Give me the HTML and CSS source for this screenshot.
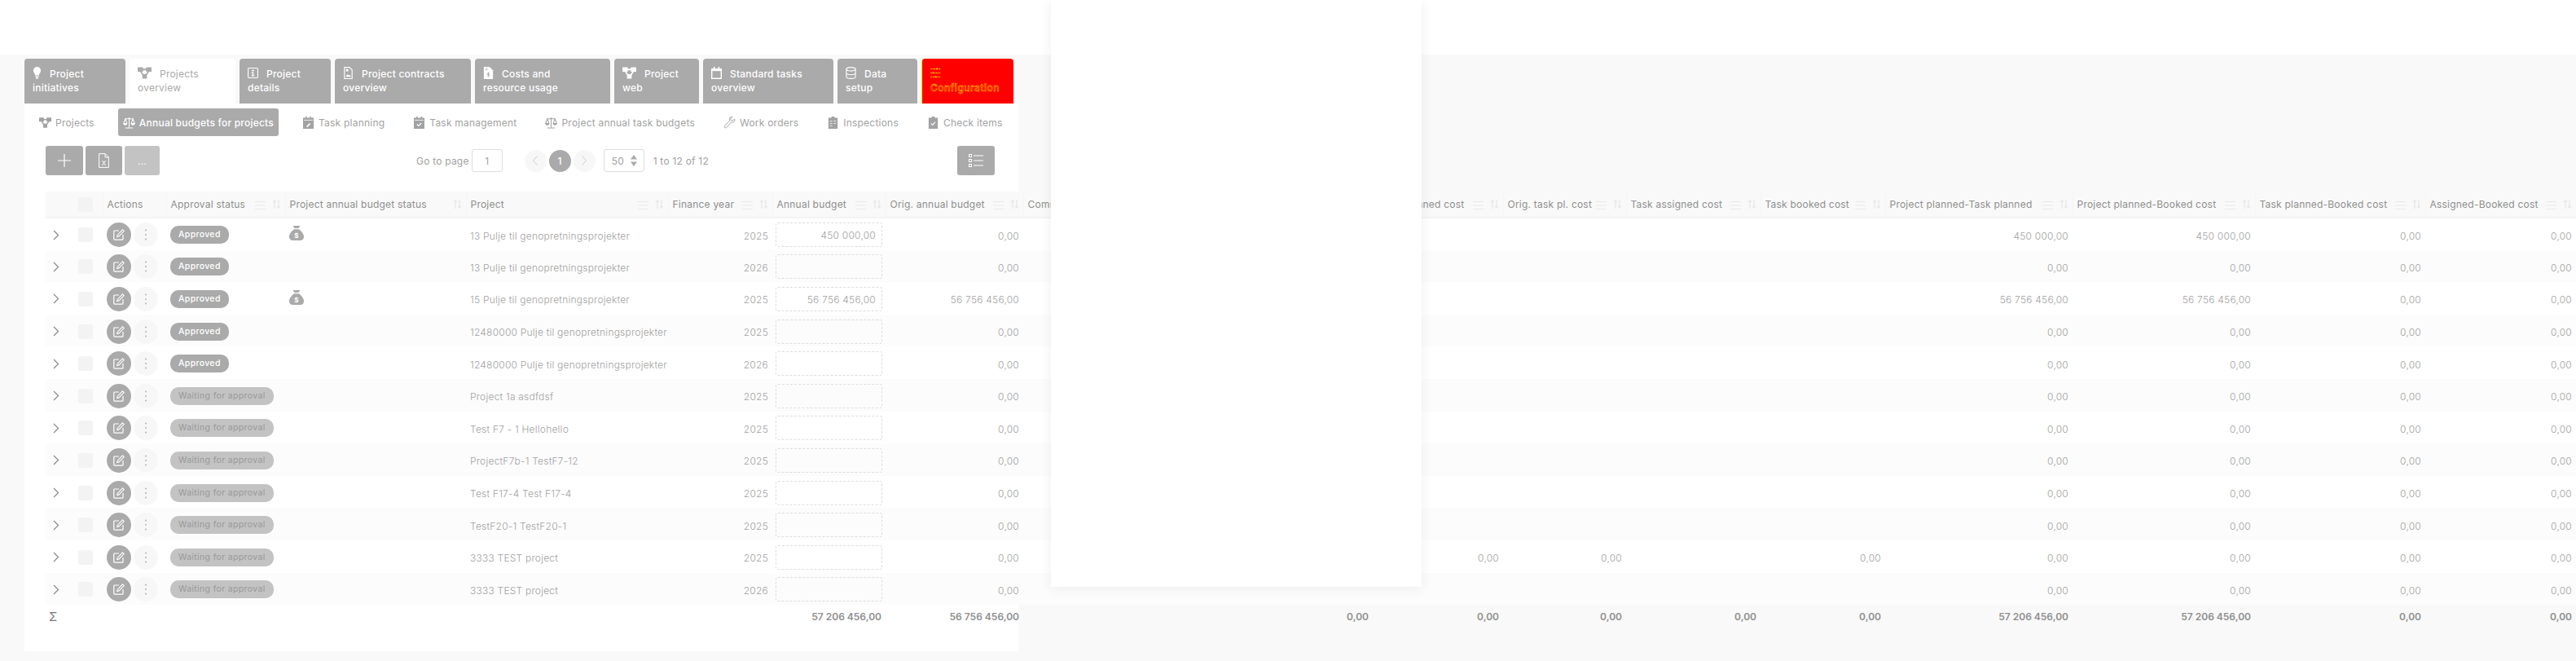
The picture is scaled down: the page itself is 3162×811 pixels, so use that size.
FILE: index.html
```html
<!DOCTYPE html>
<html lang="en">
<head>
  <meta charset="UTF-8">
  <title>Annual budgets for projects</title>
  <link rel="stylesheet" href="styles.css">
</head>
<body>
  <svg class="sprite" aria-hidden="true">
    <symbol id="i-bulb" viewBox="0 0 12 18"><path d="M6 0a5.5 5.5 0 0 1 5.5 5.5c0 3-2.2 4.300-2.700 7h-5.600C2.700 9.800.5 8.500.5 5.500A5.500 5.500 0 0 1 6 0z" fill="currentColor"/><rect x="3.400" y="13.500" width="5.200" height="1.600" fill="currentColor"/><rect x="4" y="15.800" width="4" height="1.800" rx=".8" fill="currentColor"/></symbol>
    <symbol id="i-nodes" viewBox="0 0 18 15"><g fill="currentColor"><rect width="7" height="6" rx=".6"/><rect x="11" width="7" height="6" rx=".6"/><rect x="6" y="9" width="6" height="6" rx=".6"/><path d="M6 2h6v2H6zM4.500 5l3.500 5-1.500 1-3.500-5zM13.500 5l1.500 1-3.500 5-1.500-1z"/></g></symbol>
    <symbol id="i-info" viewBox="0 0 14 14"><rect x=".6" y=".6" width="12.800" height="12.800" rx="1.400" fill="none" stroke="currentColor" stroke-width="1.200"/><path d="M5.500 3h3v1.600h-3zM5 6h2.800v4H9v1.200H5V10h1.300V7.200H5z" fill="currentColor"/></symbol>
    <symbol id="i-file-img" viewBox="0 0 12 16"><path d="M1 .6h6.500L11 4v11.400H1z" fill="none" stroke="currentColor" stroke-width="1.200"/><path d="M2.500 13l2.500-3.500 2 2 1-1 1.500 2.500z" fill="currentColor"/><rect x="3" y="3" width="3" height="3" fill="currentColor"/></symbol>
    <symbol id="i-file-usd" viewBox="0 0 12 16"><path d="M0 0h7.500L12 4.500V16H0z" fill="currentColor"/><path d="M6 7v6M7.600 8.300H5.300a.9.900 0 0 0 0 1.800h1.400a.9.900 0 0 1 0 1.800H4.400" fill="none" stroke="#aaa" stroke-width=".9"/><path d="M2 2h3M2 4h3" stroke="#aaa" stroke-width=".8"/></symbol>
    <symbol id="i-cal" viewBox="0 0 14 16"><path d="M3 0h1.800v2h4.400V0H11v2h3v14H0V2h3z" fill="currentColor"/><rect x="1.500" y="5.500" width="11" height="9" fill="#aaa"/></symbol>
    <symbol id="i-db" viewBox="0 0 14 16"><g fill="none" stroke="currentColor" stroke-width="1.200"><ellipse cx="7" cy="3" rx="6" ry="2.400"/><path d="M1 3v10c0 1.300 2.700 2.400 6 2.400s6-1.100 6-2.400V3M1 8c0 1.300 2.700 2.400 6 2.400s6-1.100 6-2.400"/></g></symbol>
    <symbol id="i-sliders" viewBox="0 0 16 16"><path d="M0 2h16M0 8h16M0 14h16M10 0v4M4 6v4M8 12v4" fill="none" stroke="currentColor" stroke-width="1" stroke-dasharray="3 1"/></symbol>
    <symbol id="i-scale" viewBox="0 0 16 16"><g fill="none" stroke="currentColor" stroke-width="1.100"><path d="M8 1v13M3 15h10M3 3h10M3 3L.8 9h4.400zM13 3l-2.200 6h4.400z"/></g><path d="M.5 9h5a2.500 2.500 0 0 1-5 0zM10.500 9h5a2.500 2.500 0 0 1-5 0z" fill="currentColor"/></symbol>
    <symbol id="i-cal-edit" viewBox="0 0 13 15"><path d="M3 0h1.600v1.600h3.800V0H10v1.600h3V15H0V1.600h3zM0 4.500h13" fill="currentColor"/><path d="M1 4.400h11" stroke="#fff" stroke-width=".8"/><path d="M4 12l4-4 1.200 1.200-4 4z" fill="#fff"/></symbol>
    <symbol id="i-cal-check" viewBox="0 0 13 15"><path d="M3 0h1.600v1.600h3.800V0H10v1.600h3V15H0V1.600h3z" fill="currentColor"/><path d="M1 4.400h11" stroke="#fff" stroke-width=".8"/><path d="M3.800 9.500l2 2 3.500-3.500" fill="none" stroke="#fff" stroke-width="1.200"/></symbol>
    <symbol id="i-wrench" viewBox="0 0 16 17"><path d="M15 3.500l-2.800 2.400-2.200-.5-.5-2.200L12 .6C9.800-.2 7.500 1.500 7.800 4.200c.1.600.2 1 .4 1.400L1.200 13c-1 1 0 3.400 2 2.600l7-7.500c3 1 6-1.600 4.800-4.600z" fill="none" stroke="currentColor" stroke-width="1.100"/></symbol>
    <symbol id="i-clip" viewBox="0 0 12 16"><path d="M4 0h4v1.500h4V16H0V1.500h4z" fill="currentColor"/><path d="M2 6h3M2 9h3M2 12h3M7 6h3M7 9h3" stroke="#fff" stroke-width=".8"/></symbol>
    <symbol id="i-clip-check" viewBox="0 0 12 16"><path d="M4 0h4v1.500h4V16H0V1.500h4z" fill="currentColor"/><path d="M3.200 9l2 2 3.500-4" fill="none" stroke="#fff" stroke-width="1.200"/></symbol>
    <symbol id="i-bag" viewBox="0 0 18 18"><path d="M4.500 0h9l-2 3h-5zM6 4.300h6c2.500 2 6 5.500 6 9.200 0 3-2 4.500-4.500 4.500h-9C2 18 0 16.500 0 13.500 0 9.800 3.500 6.300 6 4.300z" fill="currentColor"/><text x="9" y="15" text-anchor="middle" font-size="8" font-weight="700" fill="#fff" font-family="Inter, sans-serif">$</text></symbol>
    <symbol id="i-edit" viewBox="0 0 14 14"><path d="M7 2H1.800A1 1 0 0 0 .8 3v9.200a1 1 0 0 0 1 1H11a1 1 0 0 0 1-1V7" fill="none" stroke="currentColor" stroke-width="1.200"/><path d="M11.500.9l1.700 1.700L7 8.900l-2.300.6.600-2.300z" fill="none" stroke="currentColor" stroke-width="1.100"/></symbol>
    <symbol id="i-chev" viewBox="0 0 8 13"><path d="M1 1l5.500 5.500L1 12" fill="none" stroke="currentColor" stroke-width="1.200"/></symbol>
    <symbol id="i-more" viewBox="0 0 2 14"><g fill="currentColor"><circle cx="1" cy="1.500" r=".9"/><circle cx="1" cy="7" r=".9"/><circle cx="1" cy="12.500" r=".9"/></g></symbol>
    <symbol id="i-menu" viewBox="0 0 13 10"><path d="M0 .5h13M0 5h13M0 9.500h13" stroke="currentColor" stroke-width=".9"/></symbol>
    <symbol id="i-sort" viewBox="0 0 11 11"><path d="M3 11V1M.8 3L3 .8 5.200 3M8 0v10M5.800 8L8 10.200 10.200 8" fill="none" stroke="currentColor" stroke-width=".8"/></symbol>
  </svg>

  <div class="topbar"></div>

  <div class="page">
    <nav class="tabs">
      <a class="tab"><svg class="tab-icon tab-icon-bulb"><use href="#i-bulb"/></svg>Project<br>initiatives</a>
      <a class="tab active"><svg class="tab-icon tab-icon-nodes"><use href="#i-nodes"/></svg>Projects<br>overview</a>
      <a class="tab"><svg class="tab-icon"><use href="#i-info"/></svg>Project<br>details</a>
      <a class="tab"><svg class="tab-icon"><use href="#i-file-img"/></svg>Project contracts<br>overview</a>
      <a class="tab"><svg class="tab-icon"><use href="#i-file-usd"/></svg>Costs and<br>resource usage</a>
      <a class="tab"><svg class="tab-icon tab-icon-nodes"><use href="#i-nodes"/></svg>Project<br>web</a>
      <a class="tab"><svg class="tab-icon"><use href="#i-cal"/></svg>Standard tasks<br>overview</a>
      <a class="tab"><svg class="tab-icon"><use href="#i-db"/></svg>Data<br>setup</a>
      <a class="tab tab-alert"><svg class="tab-icon"><use href="#i-sliders"/></svg><br>Configuration</a>
    </nav>

    <main class="panel">
      <nav class="subnav">
        <a class="subnav-item"><svg class="sub-icon"><use href="#i-nodes"/></svg>Projects</a>
        <a class="subnav-item active"><svg class="sub-icon"><use href="#i-scale"/></svg>Annual budgets for projects</a>
        <a class="subnav-item"><svg class="sub-icon"><use href="#i-cal-edit"/></svg>Task planning</a>
        <a class="subnav-item"><svg class="sub-icon"><use href="#i-cal-check"/></svg>Task management</a>
        <a class="subnav-item"><svg class="sub-icon"><use href="#i-scale"/></svg>Project annual task budgets</a>
        <a class="subnav-item"><svg class="sub-icon"><use href="#i-wrench"/></svg>Work orders</a>
        <a class="subnav-item"><svg class="sub-icon"><use href="#i-clip"/></svg>Inspections</a>
        <a class="subnav-item"><svg class="sub-icon"><use href="#i-clip-check"/></svg>Check items</a>
      </nav>

      <div class="toolbar">
        <div class="tool-group">
          <button class="tool tool-add"><svg viewBox="0 0 16 16"><path d="M8 0v16M0 8h16" stroke="#fff" stroke-width="1.200"/></svg></button>
          <button class="tool tool-excel"><svg viewBox="0 0 13 18"><path d="M.6.6h7.500l4.300 4.300v12.500H.6zM8 .6V5h4.400" fill="none" stroke="#fff" stroke-width="1"/><text x="6.500" y="15" text-anchor="middle" font-size="8" fill="#fff" font-family="Inter, sans-serif">X</text></svg></button>
          <button class="tool tool-more">...</button>
        </div>
        <div class="pager">
          <span class="pager-label">Go to page</span>
          <input class="pager-input" type="text" value="1">
          <span class="page-btn page-prev"><svg viewBox="0 0 6 12"><path d="M5.500.5L.5 6l5 5.500" fill="none" stroke="#ccc"/></svg></span>
          <span class="page-btn current">1</span>
          <span class="page-btn"><svg viewBox="0 0 6 12"><path d="M.5.500l5 5.500-5 5.500" fill="none" stroke="#ccc"/></svg></span>
          <span class="page-size">50<svg viewBox="0 0 8 14"><path d="M4 0l4 5.500H0zM4 14L0 8.500h8z" fill="#aaa"/></svg></span>
          <span class="pager-count">1 to 12 of 12</span>
        </div>
        <button class="tool tool-columns"><svg viewBox="0 0 18 16"><path d="M6 2h12M6 8h12M6 14h12" stroke="#fff" stroke-width="1.200"/><g fill="none" stroke="#fff"><rect x=".5" y=".5" width="3" height="3"/><rect x=".5" y="6.500" width="3" height="3"/><rect x=".5" y="12.500" width="3" height="3"/></g></svg></button>
      </div>

      <table class="grid">
        <colgroup>
          <col class="c-exp"><col class="c-chk"><col class="c-act"><col class="c-appr"><col class="c-stat"><col class="c-proj"><col class="c-year"><col class="c-bud"><col class="c-orig"><col class="c-comm"><col class="c-tpl"><col class="c-otpl"><col class="c-tas"><col class="c-tbo"><col class="c-ptp"><col class="c-pbc"><col class="c-tpb"><col class="c-abc">
        </colgroup>
        <thead>
          <tr>
            <th></th>
            <th><span class="check"></span></th>
            <th><div class="th-in">Actions</div></th>
            <th><div class="th-in">Approval status<svg class="hd-menu"><use href="#i-menu"/></svg><svg class="hd-sort"><use href="#i-sort"/></svg></div></th>
            <th><div class="th-in">Project annual budget status<svg class="hd-sort hd-only"><use href="#i-sort"/></svg></div></th>
            <th><div class="th-in">Project<svg class="hd-menu"><use href="#i-menu"/></svg><svg class="hd-sort"><use href="#i-sort"/></svg></div></th>
            <th><div class="th-in">Finance year<svg class="hd-menu"><use href="#i-menu"/></svg><svg class="hd-sort"><use href="#i-sort"/></svg></div></th>
            <th><div class="th-in">Annual budget<svg class="hd-menu"><use href="#i-menu"/></svg><svg class="hd-sort"><use href="#i-sort"/></svg></div></th>
            <th><div class="th-in">Orig. annual budget<svg class="hd-menu"><use href="#i-menu"/></svg><svg class="hd-sort"><use href="#i-sort"/></svg></div></th>
            <th><div class="th-in">Committed cost<svg class="hd-menu"><use href="#i-menu"/></svg><svg class="hd-sort"><use href="#i-sort"/></svg></div></th>
            <th><div class="th-in">Task planned cost<svg class="hd-menu"><use href="#i-menu"/></svg><svg class="hd-sort"><use href="#i-sort"/></svg></div></th>
            <th><div class="th-in">Orig. task pl. cost<svg class="hd-menu"><use href="#i-menu"/></svg><svg class="hd-sort"><use href="#i-sort"/></svg></div></th>
            <th><div class="th-in">Task assigned cost<svg class="hd-menu"><use href="#i-menu"/></svg><svg class="hd-sort"><use href="#i-sort"/></svg></div></th>
            <th><div class="th-in">Task booked cost<svg class="hd-menu"><use href="#i-menu"/></svg><svg class="hd-sort"><use href="#i-sort"/></svg></div></th>
            <th><div class="th-in">Project planned-Task planned<svg class="hd-menu"><use href="#i-menu"/></svg><svg class="hd-sort"><use href="#i-sort"/></svg></div></th>
            <th><div class="th-in">Project planned-Booked cost<svg class="hd-menu"><use href="#i-menu"/></svg><svg class="hd-sort"><use href="#i-sort"/></svg></div></th>
            <th><div class="th-in">Task planned-Booked cost<svg class="hd-menu"><use href="#i-menu"/></svg><svg class="hd-sort"><use href="#i-sort"/></svg></div></th>
            <th><div class="th-in">Assigned-Booked cost<svg class="hd-menu"><use href="#i-menu"/></svg><svg class="hd-sort"><use href="#i-sort"/></svg></div></th>
          </tr>
        </thead>
        <tbody id="rows"></tbody>
        <tfoot>
          <tr>
            <td class="sigma">Σ</td><td></td><td></td><td></td><td></td><td></td><td></td>
            <td class="num">57 206 456,00</td><td class="num">56 756 456,00</td>
            <td class="num">0,00</td><td class="num">0,00</td><td class="num">0,00</td><td class="num">0,00</td><td class="num">0,00</td>
            <td class="num">57 206 456,00</td><td class="num">57 206 456,00</td><td class="num">0,00</td><td class="num">0,00</td>
          </tr>
        </tfoot>
      </table>
    </main>
  </div>

  <div class="popup"></div>

  <script src="rows.js"></script>
</body>
</html>
```

FILE: rows.js
```js
const rows = [
  ["Approved", true, "13 Pulje til genopretningsprojekter", 2025, "450 000,00", "0,00", "450 000,00", "450 000,00"],
  ["Approved", false, "13 Pulje til genopretningsprojekter", 2026, "", "0,00", "0,00", "0,00"],
  ["Approved", true, "15 Pulje til genopretningsprojekter", 2025, "56 756 456,00", "56 756 456,00", "56 756 456,00", "56 756 456,00"],
  ["Approved", false, "12480000 Pulje til genopretningsprojekter", 2025, "", "0,00", "0,00", "0,00"],
  ["Approved", false, "12480000 Pulje til genopretningsprojekter", 2026, "", "0,00", "0,00", "0,00"],
  ["Waiting for approval", false, "Project 1a asdfdsf", 2025, "", "0,00", "0,00", "0,00"],
  ["Waiting for approval", false, "Test F7 - 1 Hellohello", 2025, "", "0,00", "0,00", "0,00"],
  ["Waiting for approval", false, "ProjectF7b-1 TestF7-12", 2025, "", "0,00", "0,00", "0,00"],
  ["Waiting for approval", false, "Test F17-4 Test F17-4", 2025, "", "0,00", "0,00", "0,00"],
  ["Waiting for approval", false, "TestF20-1 TestF20-1", 2025, "", "0,00", "0,00", "0,00"],
  ["Waiting for approval", false, "3333 TEST project", 2025, "", "0,00", "0,00", "0,00", true],
  ["Waiting for approval", false, "3333 TEST project", 2026, "", "0,00", "0,00", "0,00"],
];

document.getElementById("rows").innerHTML = rows.map(([status, bag, name, year, budget, orig, pt, pb, costs]) => `
  <tr>
    <td class="exp"><svg class="chev"><use href="#i-chev"/></svg></td>
    <td><span class="check"></span></td>
    <td><div class="actions"><span class="act-edit"><svg><use href="#i-edit"/></svg></span><span class="act-more"><svg><use href="#i-more"/></svg></span></div></td>
    <td><span class="pill ${status === "Approved" ? "pill-ok" : "pill-wait"}">${status}</span></td>
    <td>${bag ? '<svg class="bag"><use href="#i-bag"/></svg>' : ""}</td>
    <td class="name">${name}</td>
    <td class="num">${year}</td>
    <td class="budget"><div class="budget-box">${budget}</div></td>
    <td class="num">${orig}</td>
    <td></td>
    <td class="num">${costs ? "0,00" : ""}</td>
    <td class="num">${costs ? "0,00" : ""}</td>
    <td></td>
    <td class="num">${costs ? "0,00" : ""}</td>
    <td class="num">${pt}</td>
    <td class="num">${pb}</td>
    <td class="num">0,00</td>
    <td class="num">0,00</td>
  </tr>`).join("");
```

FILE: styles.css
```css
/* General */
body {
  margin: 0;
  height: 811px;
  overflow: hidden;
  position: relative;
  background-color: #f9f9f9;
  color: #a2a2a2;
  font-family: Inter, "Liberation Sans", sans-serif;
  font-size: 12px;
  letter-spacing: 0.22px;
}

.sprite {
  display: none;
}

.topbar {
  height: 67px;
  background-color: white;
}

.page {
  padding: 5px 0 0 30px;
}

/* Main tabs */
.tabs {
  display: grid;
  grid-template-columns: 124px 130px 112px 167px 166px 104px 160px 98px 113px;
  column-gap: 5px;
  height: 55px;
}

.tab {
  padding: 10px 10px 0;
  background-color: #aaa;
  border-radius: 4px 4px 0 0;
  color: white;
  font-weight: 500;
  line-height: 17px;
  white-space: nowrap;
}

.tab.active {
  background-color: white;
  color: #aaa;
  font-weight: 400;
}

.tab-alert {
  background-color: #f00;
  border-left: 1px solid #ff0;
  color: #f00;
  -webkit-text-stroke: 0.35px #ff0;
  letter-spacing: 0.5px;
}

.tab-alert .tab-icon {
  color: #ff0;
}

.tab-icon {
  width: 13px;
  height: 15px;
  margin-right: 10px;
  vertical-align: -2px;
}

.tab-icon-bulb {
  width: 11px;
}

.tab-icon-nodes {
  width: 17px;
}

/* Panel */
.panel {
  width: 1220px;
  height: 672px;
  background-color: white;
}

.subnav {
  display: flex;
  gap: 23px;
  padding: 6px 0 0 12px;
}

.subnav-item {
  display: flex;
  align-items: center;
  gap: 5px;
  height: 34px;
  padding: 0 6px;
  border-radius: 3px;
  white-space: nowrap;
}

.subnav-item.active {
  background-color: #aaa;
  color: white;
  font-weight: 500;
}

.sub-icon {
  width: 15px;
  height: 15px;
}

.toolbar {
  display: flex;
  align-items: center;
  margin: 12px 29px 20px 26px;
  height: 36px;
}

.tool-group {
  display: flex;
  gap: 3px;
}

.tool {
  display: flex;
  align-items: center;
  justify-content: center;
  width: 46px;
  height: 36px;
  padding: 0;
  border: none;
  border-radius: 3px;
  background-color: #aaa;
  color: white;
}

.tool-add svg {
  width: 16px;
  height: 16px;
}

.tool-excel {
  width: 45px;
}

.tool-excel svg {
  width: 13px;
  height: 18px;
}

.tool-more {
  width: 43px;
  background-color: #c3c3c3;
  font-size: 13px;
}

.tool-columns {
  margin-left: auto;
}

.tool-columns svg {
  width: 18px;
  height: 16px;
}

.pager {
  display: flex;
  align-items: center;
  margin-left: 315px;
}

.pager-label {
  margin-right: 3px;
}

.pager-input {
  box-sizing: border-box;
  width: 38px;
  height: 28px;
  margin-right: 27px;
  border: 1px solid #ddd;
  border-radius: 3px;
  color: #a2a2a2;
  font: inherit;
  text-align: center;
}

.page-btn {
  display: flex;
  align-items: center;
  justify-content: center;
  width: 27px;
  height: 27px;
  margin-right: 3px;
  border-radius: 50%;
  background-color: #f7f7f7;
}

.page-btn svg {
  width: 6px;
  height: 12px;
}

.page-btn.current {
  background-color: #aaa;
  color: white;
  font-weight: 500;
}

.page-size {
  box-sizing: border-box;
  display: flex;
  align-items: center;
  justify-content: space-between;
  width: 50px;
  height: 28px;
  margin-left: 7px;
  padding: 0 8px 0 9px;
  border: 1px solid #ddd;
  border-radius: 3px;
}

.page-size svg {
  width: 8px;
  height: 14px;
}

.pager-count {
  margin-left: 11px;
}

/* Table */
.grid {
  table-layout: fixed;
  width: 3106px;
  margin-left: 26px;
  border-collapse: collapse;
}

.c-exp, .c-chk { width: 35px; }
.c-act { width: 78px; }
.c-appr { width: 146px; }
.c-stat { width: 222px; }
.c-proj { width: 248px; }
.c-year { width: 128px; }
.c-bud { width: 139px; }
.c-orig { width: 169px; }
.c-comm { width: 429px; }
.c-tpl { width: 160px; }
.c-otpl { width: 151px; }
.c-tas { width: 165px; }
.c-tbo { width: 153px; }
.c-ptp { width: 230px; }
.c-pbc { width: 224px; }
.c-tpb { width: 209px; }
.c-abc { width: 185px; }

th {
  height: 31px;
  padding: 0 5px;
  background-color: #f9f9f9;
  border-bottom: 2px solid #f4f4f4;
  border-left: 1px solid #f5f5f5;
  color: #8f8f8f;
  font-weight: 400;
  text-align: left;
  white-space: nowrap;
}

th:first-child, th:nth-child(2) {
  border-left: none;
}

.th-in {
  display: flex;
  align-items: center;
}

.hd-menu {
  flex: none;
  width: 13px;
  height: 10px;
  margin-left: auto;
  margin-top: 2px;
  color: #e6e6e6;
}

.hd-sort {
  flex: none;
  width: 11px;
  height: 11px;
  margin-left: 8px;
  color: #dcdcdc;
}

.hd-only {
  margin-left: auto;
}

td {
  box-sizing: border-box;
  height: 39.6px;
  padding: 2px 5px 0;
  font-weight: 300;
  white-space: nowrap;
}

td.num, td.name {
  padding-top: 4px;
}

tbody tr {
  background-color: white;
}

tbody tr:nth-child(even) {
  background-color: #fcfcfc;
}

.num {
  text-align: right;
}

td.exp {
  padding-left: 9px;
  color: #888;
}

.chev {
  display: block;
  width: 8px;
  height: 13px;
}

.check {
  display: block;
  width: 18px;
  height: 18px;
  border-radius: 3px;
  background-color: #f3f3f3;
}

.actions {
  display: flex;
  gap: 3px;
}

.act-edit, .act-more {
  display: flex;
  align-items: center;
  justify-content: center;
  width: 30px;
  height: 30px;
  border-radius: 50%;
}

.act-edit {
  background-color: #aaa;
  color: white;
}

.act-edit svg {
  width: 14px;
  height: 14px;
}

.act-more {
  background-color: #f7f7f7;
  color: #aaa;
}

.act-more svg {
  width: 2px;
  height: 14px;
}

.pill {
  display: inline-block;
  height: 22px;
  padding: 0 10px;
  border-radius: 10px;
  font-size: 10.5px;
  font-weight: 500;
  letter-spacing: 0.35px;
  line-height: 22px;
}

.pill-ok {
  background-color: #aaa;
  color: white;
}

.pill-wait {
  background-color: #c3c3c3;
  color: #999;
  font-weight: 400;
}

.bag {
  display: block;
  width: 18px;
  height: 18px;
  margin-top: -4px;
  color: #aaa;
}

td.budget {
  padding: 2px 4px 0;
}

.budget-box {
  box-sizing: border-box;
  height: 30px;
  padding-right: 7px;
  border: 1px dashed #ddd;
  border-radius: 3px;
  line-height: 29px;
  text-align: right;
}

tfoot td, tfoot td.num {
  height: 56px;
  padding-top: 0;
  padding-bottom: 28px;
  color: #8f8f8f;
  font-weight: 600;
  letter-spacing: 0;
}

tfoot .sigma {
  padding-left: 4px;
  color: #777;
  font-size: 15px;
  font-weight: 400;
}

/* White dialog laid over the table */
.popup {
  position: absolute;
  top: 0;
  left: 1290px;
  width: 455px;
  height: 720px;
  background-color: white;
  box-shadow: 0 2px 14px rgba(0, 0, 0, 0.07);
}
```
